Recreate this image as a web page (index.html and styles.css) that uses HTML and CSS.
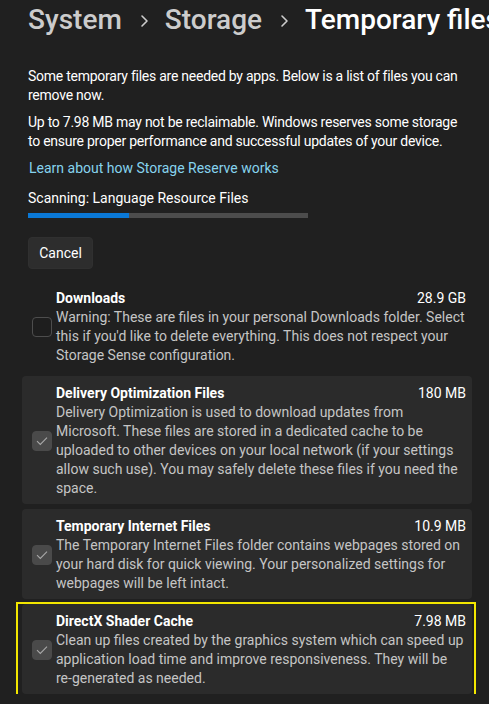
FILE: index.html
```html
<!DOCTYPE html>
<html lang="en">
<head>
    <meta charset="UTF-8">
    <title>Temporary files</title>
    <link rel="stylesheet" href="styles.css">
</head>
<body>

    <div class="page">
        <nav class="breadcrumb">
            <span class="crumb">System</span>
            <svg class="chevron" width="9" height="14" viewBox="0 0 9 14"><path d="M2 2 L7 7 L2 12" fill="none" stroke="currentColor" stroke-width="1.6" stroke-linecap="round" stroke-linejoin="round"/></svg>
            <span class="crumb">Storage</span>
            <svg class="chevron" width="9" height="14" viewBox="0 0 9 14"><path d="M2 2 L7 7 L2 12" fill="none" stroke="currentColor" stroke-width="1.6" stroke-linecap="round" stroke-linejoin="round"/></svg>
            <span class="crumb current">Temporary files</span>
        </nav>

        <p class="intro">Some temporary files are needed by apps. Below is a list of files you can remove now.</p>
        <p class="intro">Up to 7.98 MB may not be reclaimable. Windows reserves some storage to ensure proper performance and successful updates of your device.</p>
        <a class="link" href="#">Learn about how Storage Reserve works</a>

        <div class="scan">
            <div class="scan-label">Scanning: Language Resource Files</div>
            <div class="progress"><div class="progress-fill" style="width: 36%"></div></div>
        </div>

        <button type="button" class="btn">Cancel</button>

        <ul class="file-list">
            <li class="file-item plain">
                <span class="check"></span>
                <div class="file-info">
                    <div class="file-head">
                        <span class="file-name">Downloads</span>
                        <span class="file-size">28.9 GB</span>
                    </div>
                    <div class="file-desc">Warning: These are files in your personal Downloads folder. Select this if you'd like to delete everything. This does not respect your Storage Sense configuration.</div>
                </div>
            </li>
            <li class="file-item">
                <span class="check checked"><svg width="12" height="10" viewBox="0 0 12 10"><path d="M1 5.2 L4.3 8.4 L11 1.6" fill="none" stroke="currentColor" stroke-width="1.1"/></svg></span>
                <div class="file-info">
                    <div class="file-head">
                        <span class="file-name">Delivery Optimization Files</span>
                        <span class="file-size">180 MB</span>
                    </div>
                    <div class="file-desc">Delivery Optimization is used to download updates from Microsoft. These files are stored in a dedicated cache to be uploaded to other devices on your local network (if your settings allow such use). You may safely delete these files if you need the space.</div>
                </div>
            </li>
            <li class="file-item">
                <span class="check checked"><svg width="12" height="10" viewBox="0 0 12 10"><path d="M1 5.2 L4.3 8.4 L11 1.6" fill="none" stroke="currentColor" stroke-width="1.1"/></svg></span>
                <div class="file-info">
                    <div class="file-head">
                        <span class="file-name">Temporary Internet Files</span>
                        <span class="file-size">10.9 MB</span>
                    </div>
                    <div class="file-desc">The Temporary Internet Files folder contains webpages stored on your hard disk for quick viewing. Your personalized settings for webpages will be left intact.</div>
                </div>
            </li>
            <li class="file-item highlighted">
                <span class="check checked"><svg width="12" height="10" viewBox="0 0 12 10"><path d="M1 5.2 L4.3 8.4 L11 1.6" fill="none" stroke="currentColor" stroke-width="1.1"/></svg></span>
                <div class="file-info">
                    <div class="file-head">
                        <span class="file-name">DirectX Shader Cache</span>
                        <span class="file-size">7.98 MB</span>
                    </div>
                    <div class="file-desc">Clean up files created by the graphics system which can speed up application load time and improve responsiveness. They will be re-generated as needed.</div>
                </div>
            </li>
        </ul>
    </div>

</body>
</html>
```

FILE: styles.css
```css
* {
    box-sizing: border-box;
}
body {
    margin: 0;
    background: #202020;
    color: #ffffff;
    font-family: Roboto, "Liberation Sans", Arial, sans-serif;
    font-size: 14px;
    line-height: 19px;
    overflow: hidden;
}
.page {
    padding: 2px 17px 0 28px;
}
.breadcrumb {
    display: flex;
    align-items: center;
    white-space: nowrap;
    height: 36px;
    font-size: 28px;
    font-weight: 500;
    line-height: 36px;
    color: #cccccc;
}
.chevron {
    margin: 2px 16px 0 18px;
    flex: none;
}
.crumb.current {
    color: #ffffff;
}
.intro {
    margin: 29px 0 0;
    width: 438px;
    letter-spacing: -0.25px;
}
.intro + .intro {
    margin-top: 8px;
}
.link {
    display: block;
    margin-top: 8px;
    margin-left: 1px;
    color: #86d3ee;
    text-decoration: none;
}
.scan {
    margin-top: 11px;
}
.progress {
    margin-top: 5px;
    width: 280px;
    height: 5px;
    background: #4c4c4c;
}
.progress-fill {
    height: 100%;
    background: #0a78d6;
}
.btn {
    margin-top: 19px;
    width: 65px;
    height: 32px;
    border: 1px solid #303030;
    border-radius: 4px;
    background: #2d2d2d;
    color: #ffffff;
    font: inherit;
}
.file-list {
    list-style: none;
    margin: 12px 0 0 -6px;
    padding: 0;
    display: flex;
    flex-direction: column;
    gap: 5px;
}
.file-item {
    position: relative;
    display: flex;
    align-items: center;
    gap: 4px;
    padding: 8px 6px 6px 10px;
    background: #2b2b2b;
    border-radius: 4px;
}
.file-item.plain {
    background: transparent;
}
.file-item.highlighted::after {
    content: "";
    position: absolute;
    left: -6px;
    right: -4px;
    top: -2px;
    bottom: -3px;
    border: 2px solid #f2e600;
    pointer-events: none;
}
.check {
    flex: none;
    width: 20px;
    height: 20px;
    border: 1px solid #4d4d4d;
    border-radius: 4px;
    background: #1e1e1e;
    display: flex;
    align-items: center;
    justify-content: center;
    color: #a8a8a8;
}
.check.checked {
    border-color: #4a4a4a;
    background: #4a4a4a;
}
.file-info {
    flex: 1;
}
.file-head {
    display: flex;
    justify-content: space-between;
}
.file-name {
    font-weight: 700;
}
.file-desc {
    color: #c5c5c5;
}
```
